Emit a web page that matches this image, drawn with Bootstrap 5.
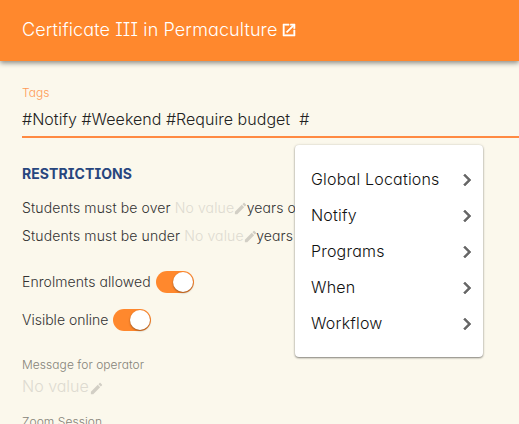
<!DOCTYPE html>
<html lang="en">
<head>
<meta charset="utf-8">
<meta name="viewport" content="width=device-width, initial-scale=1">
<title>Certificate III in Permaculture</title>
<link href="https://cdn.jsdelivr.net/npm/bootstrap@5.3.0/dist/css/bootstrap.min.css" rel="stylesheet">
<style>
body{background:#fbf8ec;font-family:Inter,"Open Sans",sans-serif;font-weight:300;font-feature-settings:"cv11","cv08";color:#333;height:424px;overflow:hidden;font-size:14px;line-height:20px}
.topbar{height:61px;background:#ff882d;color:#fff;font-size:18px;letter-spacing:.11px;box-shadow:0 2px 5px rgba(0,0,0,.45);padding:0 22px 2px;white-space:pre}
.topbar svg{width:16px;height:16px;margin-left:4px}
.panel{padding:22px 0 0 22px;white-space:nowrap}
.tag-label{font-size:12px;color:#ff9b58}
.tag-value{height:35px;margin-bottom:26px;border-bottom:2px solid #ff8a42;font-size:16px;letter-spacing:.03px;line-height:32px;color:#222;white-space:pre}
.section-title{font-size:14px;font-weight:650;letter-spacing:.08px;line-height:20px;color:#27467e;margin:0}
.rules{padding-top:10px;letter-spacing:.12px}
.rule{height:28px}
.blank{color:#dedbd1}
.blank svg{width:15px;height:15px;fill:#d2cfc5}
.rule svg{margin:0 -1.5px 0 -1px}
.toggles{padding-top:13px}
.toggle-row{height:38px}
.toggle-row:first-child{letter-spacing:.07px}
.switch{width:38px;height:22px;border-radius:11px;background:#ff882d;padding:1px;margin-left:5px}
.knob{width:20px;height:20px;background:#fff;box-shadow:0 1px 2px rgba(0,0,0,.4)}
.field-label{font-size:12px;letter-spacing:.05px;color:#858379}
.blank-lg{height:21px;padding-top:1px}
.menu{left:295px;top:145px;width:188px;height:212px;background:#fff;border-radius:4px;box-shadow:0 1px 2px rgba(0,0,0,.45),0 0 3px rgba(0,0,0,.12);padding:16px 4px 0 16px;font-size:16px;letter-spacing:.2px;color:#111}
.menu-row{height:36px}
.menu svg{width:24px;height:24px;fill:#666;stroke:#666;stroke-width:.6;margin-top:1px}
</style>
</head>
<body>
<header class="topbar d-flex align-items-center position-relative"><span>Certificate III in Permaculture</span><svg viewBox="0 0 24 24" fill="#fff"><path d="M19 19H5V5h7V3H3v18h18v-9h-2v7zM14 3v2h3.6l-9.8 9.8 1.4 1.4L19 6.4V10h2V3h-7z" stroke="#fff" stroke-width=".8"/></svg></header>
<main class="panel">
<div class="tag-label">Tags</div>
<div class="tag-value">#Notify #Weekend #Require budget  #</div>
<h2 class="section-title">RESTRICTIONS</h2>
<div class="rules">
<div class="rule d-flex align-items-center"><span>Students must be over</span><span class="blank d-flex align-items-center ms-1"><span>No value</span><svg viewBox="0 0 24 24"><path d="M3 17.25V21h3.75L17.8 9.94l-3.75-3.75zM20.7 7.04c.4-.4.4-1.02 0-1.41l-2.34-2.34c-.39-.39-1.02-.39-1.41 0l-1.83 1.83 3.75 3.75z"/></svg></span><span>years old</span></div>
<div class="rule d-flex align-items-center"><span>Students must be under</span><span class="blank d-flex align-items-center ms-1"><span>No value</span><svg viewBox="0 0 24 24"><path d="M3 17.25V21h3.75L17.8 9.94l-3.75-3.75zM20.7 7.04c.4-.4.4-1.02 0-1.41l-2.34-2.34c-.39-.39-1.02-.39-1.41 0l-1.83 1.83 3.75 3.75z"/></svg></span><span>years</span></div>
</div>
<div class="toggles">
<div class="toggle-row d-flex align-items-center"><span>Enrolments allowed</span><span class="switch d-flex justify-content-end"><span class="knob rounded-circle"></span></span></div>
<div class="toggle-row d-flex align-items-center"><span>Visible online</span><span class="switch d-flex justify-content-end"><span class="knob rounded-circle"></span></span></div>
</div>
<div class="field-label mt-3">Message for operator</div>
<div class="blank blank-lg fs-6 d-flex align-items-center"><span>No value</span><svg class="mt-1" viewBox="0 0 24 24"><path d="M3 17.25V21h3.75L17.8 9.94l-3.75-3.75zM20.7 7.04c.4-.4.4-1.02 0-1.41l-2.34-2.34c-.39-.39-1.02-.39-1.41 0l-1.83 1.83 3.75 3.75z"/></svg></div>
<div class="field-label mt-3">Zoom Session</div>
</main>
<div class="menu position-absolute">
<div class="menu-row d-flex align-items-center justify-content-between"><span>Global Locations</span><svg viewBox="0 0 24 24"><path d="M10 6 8.6 7.4l4.6 4.6-4.6 4.6L10 18l6-6z"/></svg></div>
<div class="menu-row d-flex align-items-center justify-content-between"><span>Notify</span><svg viewBox="0 0 24 24"><path d="M10 6 8.6 7.4l4.6 4.6-4.6 4.6L10 18l6-6z"/></svg></div>
<div class="menu-row d-flex align-items-center justify-content-between"><span>Programs</span><svg viewBox="0 0 24 24"><path d="M10 6 8.6 7.4l4.6 4.6-4.6 4.6L10 18l6-6z"/></svg></div>
<div class="menu-row d-flex align-items-center justify-content-between"><span>When</span><svg viewBox="0 0 24 24"><path d="M10 6 8.6 7.4l4.6 4.6-4.6 4.6L10 18l6-6z"/></svg></div>
<div class="menu-row d-flex align-items-center justify-content-between"><span>Workflow</span><svg viewBox="0 0 24 24"><path d="M10 6 8.6 7.4l4.6 4.6-4.6 4.6L10 18l6-6z"/></svg></div>
</div>
<script src="https://cdn.jsdelivr.net/npm/bootstrap@5.3.0/dist/js/bootstrap.bundle.min.js"></script>
</body>
</html>
